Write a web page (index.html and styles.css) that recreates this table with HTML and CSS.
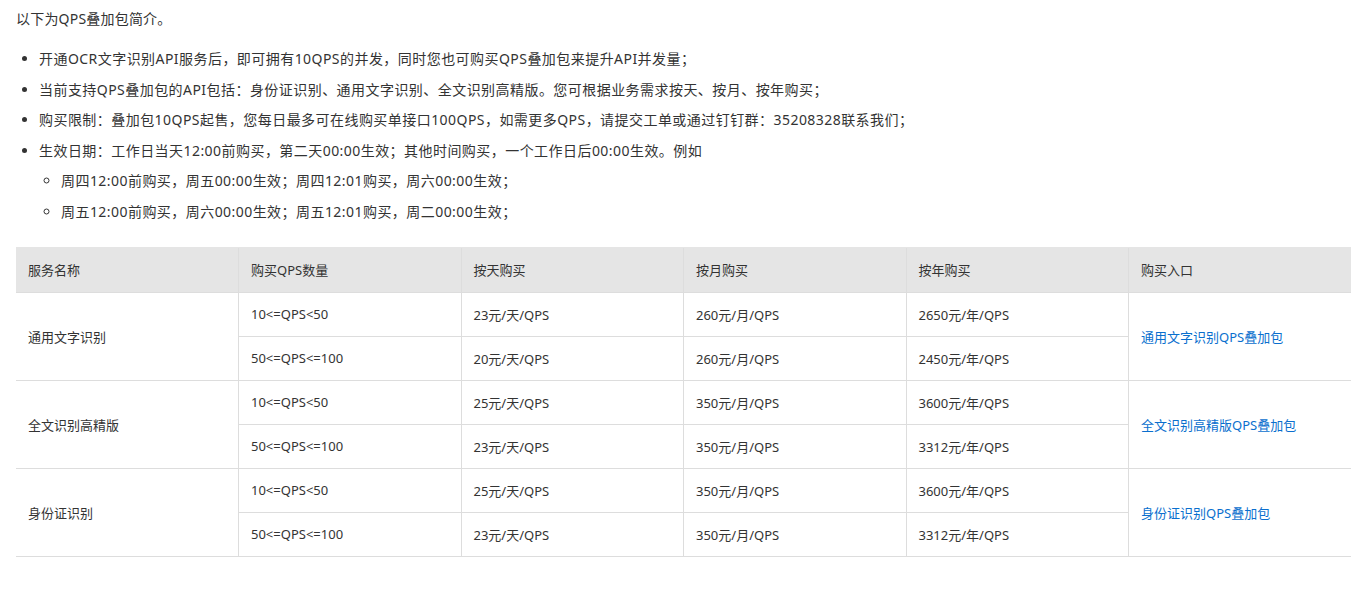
FILE: index.html
```html
<!DOCTYPE html>
<html>
<head>
<meta charset="utf-8">
<title>QPS叠加包简介</title>
<link rel="stylesheet" href="styles.css">
</head>
<body>
<div class="doc">
  <p class="intro">以下为QPS叠加包简介。</p>
  <ul class="list">
    <li>开通OCR文字识别API服务后，即可拥有10QPS的并发，同时您也可购买QPS叠加包来提升API并发量；</li>
    <li>当前支持QPS叠加包的API包括：身份证识别、通用文字识别、全文识别高精版。您可根据业务需求按天、按月、按年购买；</li>
    <li>购买限制：叠加包10QPS起售，您每日最多可在线购买单接口100QPS，如需更多QPS，请提交工单或通过钉钉群：35208328联系我们；</li>
    <li>生效日期：工作日当天12:00前购买，第二天00:00生效；其他时间购买，一个工作日后00:00生效。例如
      <ul class="sublist">
        <li>周四12:00前购买，周五00:00生效；周四12:01购买，周六00:00生效；</li>
        <li>周五12:00前购买，周六00:00生效；周五12:01购买，周二00:00生效；</li>
      </ul>
    </li>
  </ul>
  <table class="price">
    <thead>
      <tr>
        <th>服务名称</th>
        <th>购买QPS数量</th>
        <th>按天购买</th>
        <th>按月购买</th>
        <th>按年购买</th>
        <th>购买入口</th>
      </tr>
    </thead>
    <tbody>
      <tr>
        <td rowspan="2">通用文字识别</td>
        <td>10&lt;=QPS&lt;50</td>
        <td>23元/天/QPS</td>
        <td>260元/月/QPS</td>
        <td>2650元/年/QPS</td>
        <td rowspan="2"><a class="link" href="#">通用文字识别QPS叠加包</a></td>
      </tr>
      <tr>
        <td>50&lt;=QPS&lt;=100</td>
        <td>20元/天/QPS</td>
        <td>260元/月/QPS</td>
        <td>2450元/年/QPS</td>
      </tr>
      <tr>
        <td rowspan="2">全文识别高精版</td>
        <td>10&lt;=QPS&lt;50</td>
        <td>25元/天/QPS</td>
        <td>350元/月/QPS</td>
        <td>3600元/年/QPS</td>
        <td rowspan="2"><a class="link" href="#">全文识别高精版QPS叠加包</a></td>
      </tr>
      <tr>
        <td>50&lt;=QPS&lt;=100</td>
        <td>23元/天/QPS</td>
        <td>350元/月/QPS</td>
        <td>3312元/年/QPS</td>
      </tr>
      <tr>
        <td rowspan="2">身份证识别</td>
        <td>10&lt;=QPS&lt;50</td>
        <td>25元/天/QPS</td>
        <td>350元/月/QPS</td>
        <td>3600元/年/QPS</td>
        <td rowspan="2"><a class="link" href="#">身份证识别QPS叠加包</a></td>
      </tr>
      <tr>
        <td>50&lt;=QPS&lt;=100</td>
        <td>23元/天/QPS</td>
        <td>350元/月/QPS</td>
        <td>3312元/年/QPS</td>
      </tr>
    </tbody>
  </table>
</div>
</body>
</html>
```
FILE: styles.css
```css
html, body {
  margin: 0;
  padding: 0;
  background: #fff;
}
body {
  font-family: "Noto Sans", "Noto Sans CJK SC", "Liberation Sans", sans-serif;
  font-size: 14px;
  color: #333;
}
.doc {
  padding: 8px 6px 0 16px;
}
.intro {
  margin: 0;
  line-height: 22px;
  letter-spacing: 0.2px;
}
.list {
  margin: 14px 0 0 0;
  padding-left: 23px;
  list-style: disc;
  letter-spacing: 0.45px;
}
.list li {
  line-height: 30.6px;
}
.sublist {
  margin: 0;
  padding-left: 22px;
  list-style: circle;
}
.price {
  margin-top: 19px;
  width: 100%;
  border-collapse: collapse;
  table-layout: fixed;
  font-size: 13px;
  letter-spacing: 0;
}
.price th,
.price td {
  text-align: left;
  padding: 0 12px;
  font-weight: normal;
  border-left: 1px solid #dddddd;
  border-bottom: 1px solid #dddddd;
}
.price th:first-child,
.price tbody tr:nth-child(odd) td:first-child {
  border-left: none;
}
.price th {
  background: #e5e5e5;
  height: 44px;
  border-top: 1px solid #e5e5e5;
}
.price td {
  height: 43px;
}
.link {
  color: #0a6fce;
  text-decoration: none;
}
```
